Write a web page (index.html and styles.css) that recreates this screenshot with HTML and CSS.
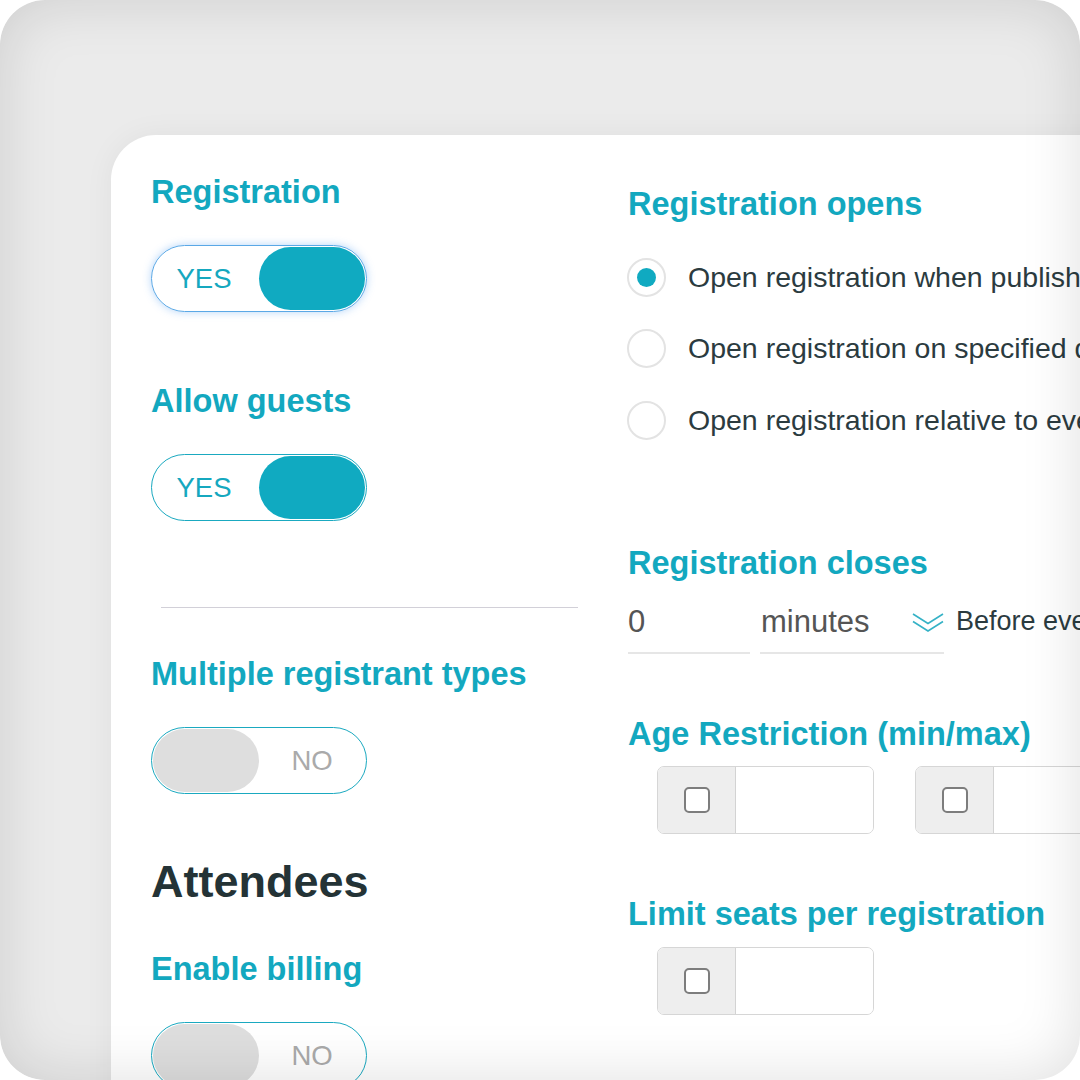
FILE: index.html
```html
<!DOCTYPE html>
<html>
<head>
    <meta charset="UTF-8">
    <meta name="viewport" content="width=device-width, initial-scale=1.0">
    <link rel="stylesheet" href="styles.css">
</head>
<body>
    <div class="frame">
        <div class="card">
            <div class="col col-left">
                <div class="group">
                    <h2 class="field-label">Registration</h2>
                    <div class="toggle on focused">
                        <span class="toggle-text">YES</span>
                        <span class="knob"></span>
                    </div>
                </div>

                <div class="group group-gap">
                    <h2 class="field-label">Allow guests</h2>
                    <div class="toggle on">
                        <span class="toggle-text">YES</span>
                        <span class="knob"></span>
                    </div>
                </div>

                <hr class="divider">

                <div class="group">
                    <h2 class="field-label">Multiple registrant types</h2>
                    <div class="toggle off">
                        <span class="knob"></span>
                        <span class="toggle-text">NO</span>
                    </div>
                </div>

                <h1 class="section-title">Attendees</h1>

                <div class="group">
                    <h2 class="field-label">Enable billing</h2>
                    <div class="toggle off">
                        <span class="knob"></span>
                        <span class="toggle-text">NO</span>
                    </div>
                </div>
            </div>

            <div class="col col-right">
                <h2 class="field-label">Registration opens</h2>
                <div class="radio-list">
                    <label class="radio-row">
                        <span class="radio checked"></span>
                        Open registration when published
                    </label>
                    <label class="radio-row">
                        <span class="radio"></span>
                        Open registration on specified date
                    </label>
                    <label class="radio-row">
                        <span class="radio"></span>
                        Open registration relative to event
                    </label>
                </div>

                <h2 class="field-label closes-label">Registration closes</h2>
                <div class="closes-row">
                    <div class="line-input amount">0</div>
                    <div class="line-input unit">
                        <span>minutes</span>
                        <svg class="chevrons" width="32" height="22" viewBox="0 0 32 22">
                            <path d="M1 2 L16 11.5 L31 2" fill="none" stroke="#35b2c6" stroke-width="1.6"/>
                            <path d="M1 9.5 L16 19 L31 9.5" fill="none" stroke="#35b2c6" stroke-width="1.6"/>
                        </svg>
                    </div>
                    <span class="relation">Before event starts</span>
                </div>

                <h2 class="field-label spaced-label">Age Restriction (min/max)</h2>
                <div class="input-groups">
                    <div class="input-group">
                        <span class="addon"><span class="checkbox"></span></span>
                        <span class="addon-input"></span>
                    </div>
                    <div class="input-group">
                        <span class="addon"><span class="checkbox"></span></span>
                        <span class="addon-input"></span>
                    </div>
                </div>

                <h2 class="field-label spaced-label">Limit seats per registration</h2>
                <div class="input-groups seats">
                    <div class="input-group">
                        <span class="addon"><span class="checkbox"></span></span>
                        <span class="addon-input"></span>
                    </div>
                </div>
            </div>
        </div>
    </div>
</body>
</html>
```

FILE: styles.css
```css
* {
    margin: 0;
    padding: 0;
    box-sizing: border-box;
    font-family: 'Liberation Sans', Arial, Helvetica, sans-serif;
}

body {
    width: 1080px;
    height: 1080px;
    background: #fff;
    overflow: hidden;
}

.frame {
    position: relative;
    width: 1080px;
    height: 1080px;
    border-radius: 45px;
    background: #ebebeb;
    overflow: hidden;
}

/* soft vignette over everything */
.frame::after {
    content: "";
    position: absolute;
    inset: 0;
    border-radius: 45px;
    box-shadow: inset 0 0 60px rgba(0, 0, 0, 0.13);
    pointer-events: none;
}

.card {
    margin: 135px 0 0 111px;
    width: 1100px;
    height: 1100px;
    background: #fff;
    border-top-left-radius: 45px;
    box-shadow: 0 0 30px rgba(0, 0, 0, 0.05);
    padding: 38px 0 0 40px;
    display: grid;
    grid-template-columns: 427px 1fr;
    column-gap: 50px;
}

.col {
    display: flex;
    flex-direction: column;
    white-space: nowrap;
}

.col-right {
    padding-top: 12px;
}

.field-label {
    font-size: 32.5px;
    line-height: 38px;
    font-weight: bold;
    color: #13a8bf;
}

.group .field-label {
    margin-bottom: 34px;
}

.group-gap {
    margin-top: 70px;
}

/* toggles */
.toggle {
    width: 216px;
    height: 67px;
    border: 1px solid #1aa9c0;
    border-radius: 34px;
    padding: 1px;
    display: flex;
    align-items: stretch;
}

.toggle.focused {
    border-color: #5aa8e6;
    box-shadow: 0 0 9px rgba(70, 150, 240, 0.4);
}

.knob {
    width: 106px;
    border-radius: 32px;
}

.toggle.on .knob {
    background: #10aac1;
}

.toggle.off .knob {
    background: #dedede;
}

.toggle-text {
    flex: 1;
    display: flex;
    align-items: center;
    justify-content: center;
    font-size: 27.5px;
}

.toggle.on .toggle-text {
    color: #15a8bf;
    padding-right: 4px;
}

.toggle.off .toggle-text {
    color: #aaaaaa;
}

.divider {
    border: none;
    border-top: 1px solid #d2d0d8;
    margin: 86px 0 47px 10px;
}

.section-title {
    margin-top: 61px;
    margin-bottom: 42px;
    font-size: 45px;
    line-height: 53px;
    font-weight: bold;
    color: #243336;
}

/* radios */
.radio-list {
    margin-top: 32px;
    display: flex;
    flex-direction: column;
    gap: 27.5px;
}

.radio-row {
    height: 44px;
    display: flex;
    align-items: center;
    gap: 22px;
    font-size: 28.5px;
    color: #2b3b3f;
}

.radio {
    width: 39px;
    height: 39px;
    margin-left: -1px;
    border: 2px solid #e3e3e3;
    border-radius: 50%;
    display: flex;
    align-items: center;
    justify-content: center;
    flex-shrink: 0;
}

.radio.checked::before {
    content: "";
    width: 19px;
    height: 19px;
    border-radius: 50%;
    background: #10aac1;
}

.closes-label {
    margin-top: 102px;
}

.closes-row {
    margin-top: 10px;
    display: flex;
    align-items: center;
    gap: 10px;
}

.line-input {
    height: 62px;
    border-bottom: 2px solid #e6e6e6;
    display: flex;
    align-items: center;
    font-size: 31px;
    color: #555;
}

.line-input.amount {
    width: 122px;
}

.line-input.unit {
    width: 184px;
    justify-content: space-between;
    padding-left: 1px;
}

.chevrons {
    margin-top: 2px;
}

.relation {
    margin-left: 2px;
    font-size: 27px;
    color: #2b3b3f;
    padding-bottom: 4px;
}

.spaced-label {
    margin-top: 61px;
}

/* checkbox input groups */
.input-groups {
    margin-top: 13px;
    padding-left: 29px;
    display: flex;
    gap: 41px;
}

.input-groups.seats {
    margin-top: 14px;
}

.input-group {
    width: 217px;
    height: 68px;
    border: 1.5px solid #d6d6d6;
    border-radius: 7px;
    display: flex;
    overflow: hidden;
}

.addon {
    width: 78px;
    background: #eeeeee;
    border-right: 1.5px solid #d3d3d3;
    display: flex;
    align-items: center;
    justify-content: center;
}

.checkbox {
    width: 26px;
    height: 26px;
    background: #fff;
    border: 2px solid #7d7d7d;
    border-radius: 5px;
}

.addon-input {
    flex: 1;
    background: #fff;
}
```
